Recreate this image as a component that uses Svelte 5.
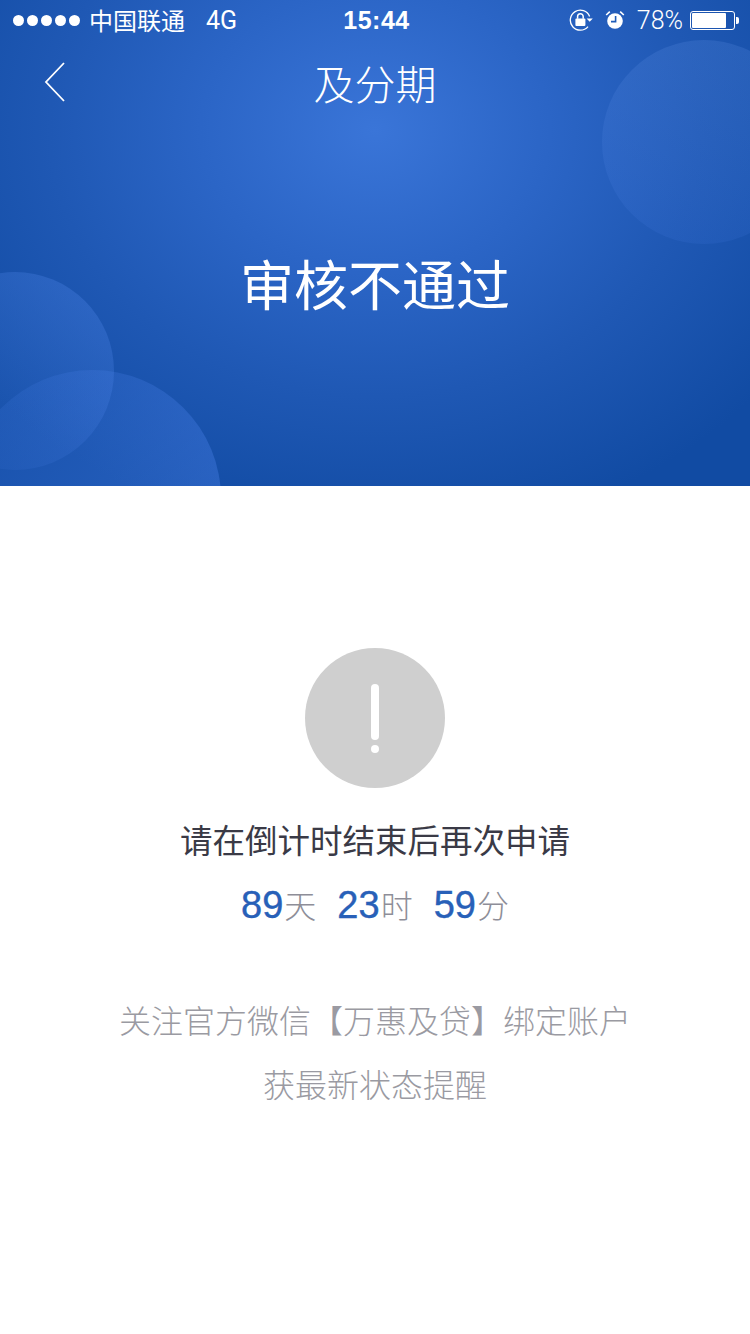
<script>
  const dots = [0, 1, 2, 3, 4];
</script>

<div class="page">
  <header class="hero">
    <span class="bubble b1"></span>
    <span class="bubble b2"></span>
    <span class="bubble b3"></span>
    <div class="status">
      <div class="left">
        <div class="dots">
          {#each dots as d (d)}<i></i>{/each}
        </div>
        <span class="carrier">中国联通</span>
        <span class="net">4G</span>
      </div>
      <span class="clock">15:44</span>
      <div class="right">
        <svg class="lock" width="24" height="22" viewBox="0 0 24 22">
          <path d="M19 17.6A10 10 0 1 1 20.6 7.5" fill="none" stroke="#fff" stroke-width="1.3"/>
          <path d="M17.6 9.4h6.2l-3.1 3.4z" fill="#fff"/>
          <rect x="6.4" y="9.6" width="10" height="7.4" rx="1" fill="#fff"/>
          <path d="M8.6 9.8V7.6a2.8 2.8 0 0 1 5.6 0v2.2" fill="none" stroke="#fff" stroke-width="1.5"/>
        </svg>
        <svg class="alarm" width="20" height="20" viewBox="0 0 20 20">
          <circle cx="10" cy="11" r="7.8" fill="#fff"/>
          <path d="M1.2 5L4.8 1.6M18.8 5L15.2 1.6" stroke="#fff" stroke-width="1.6" fill="none"/>
          <path d="M10.6 6v5.6H6" stroke="#1f5cb8" stroke-width="1.6" fill="none"/>
        </svg>
        <span class="pct">78%</span>
        <div class="battery"><div class="level"></div></div>
        <span class="nub"></span>
      </div>
    </div>
    <div class="nav">
      <svg class="back" width="24" height="44" viewBox="0 0 24 44">
        <path d="M21 3L3 22l18 19" fill="none" stroke="#fff" stroke-width="1.8"/>
      </svg>
      <h1>及分期</h1>
    </div>
    <p class="result">审核不通过</p>
  </header>

  <main class="body">
    <div class="warn"><span class="bar"></span><span class="dot"></span></div>
    <p class="tip">请在倒计时结束后再次申请</p>
    <p class="count">
      <b>89</b><span>天</span><b class="gap">23</b><span>时</span><b class="gap">59</b><span>分</span>
    </p>
    <p class="follow">关注官方微信【万惠及贷】绑定账户<br />获最新状态提醒</p>
  </main>
</div>

<style>
  :global(body) { margin: 0; background: #fff; }
  .page {
    width: 750px;
    height: 1334px;
    overflow: hidden;
    background: #fff;
    font-family: "Noto Sans CJK SC", "Liberation Sans", sans-serif;
  }
  .hero {
    position: relative;
    height: 486px;
    overflow: hidden;
    color: #fff;
    background: radial-gradient(ellipse 500px 410px at 375px 130px, #3a75d8 0%, #2b65c6 35%, #1f58b4 65%, #114ba3 100%);
  }
  .bubble { position: absolute; border-radius: 50%; }
  .b1 {
    left: 602px; top: 40px; width: 204px; height: 204px;
    background: linear-gradient(180deg, rgba(90, 140, 225, 0.24), rgba(70, 125, 230, 0.14));
  }
  .b2 {
    left: -84px; top: 272px; width: 198px; height: 198px;
    background: linear-gradient(40deg, rgba(70, 125, 235, 0.04), rgba(85, 140, 240, 0.32));
  }
  .b3 {
    left: -36px; top: 370px; width: 257px; height: 257px;
    background: linear-gradient(120deg, rgba(70, 125, 235, 0.1), rgba(80, 135, 240, 0.42));
  }
  .status {
    position: relative;
    display: flex;
    align-items: center;
    justify-content: space-between;
    height: 40px;
    padding: 0 11px 0 13px;
  }
  .left, .right { display: flex; align-items: center; flex: 1; }
  .right { justify-content: flex-end; }
  .dots { display: flex; gap: 3px; margin-right: 9px; }
  .dots i { width: 11px; height: 11px; border-radius: 50%; background: #fff; }
  .carrier { font-size: 24px; line-height: 40px; font-weight: 400; }
  .net { font: 400 25px Roboto, sans-serif; margin-left: 21px; }
  .clock { font: bold 25px "Liberation Sans", sans-serif; letter-spacing: 0.5px; margin-left: 1px; }
  .lock { margin-right: 12px; }
  .alarm { margin-right: 12px; }
  .pct { font: 300 25px Roboto, sans-serif; margin-right: 7px; }
  .battery {
    box-sizing: border-box;
    width: 45px;
    height: 19px;
    padding: 1px;
    border: 1px solid #fff;
    border-radius: 3px;
  }
  .level { width: 34px; height: 100%; background: #fff; border-radius: 1px; }
  .nub { width: 3px; height: 7px; margin-left: 1px; background: #fff; border-radius: 0 2px 2px 0; }
  .nav {
    position: relative;
    display: flex;
    align-items: center;
    justify-content: center;
    height: 84px;
  }
  .back { position: absolute; left: 43px; top: 20px; }
  h1 { margin: 0; font-size: 41px; font-weight: 300; line-height: 84px; }
  .result {
    position: relative;
    margin: 123px 0 0;
    text-align: center;
    font-size: 54px;
    line-height: 72px;
    font-weight: 400;
  }
  .body { display: flex; flex-direction: column; align-items: center; padding-top: 162px; }
  .warn {
    display: flex;
    flex-direction: column;
    align-items: center;
    box-sizing: border-box;
    width: 140px;
    height: 140px;
    padding-top: 36px;
    border-radius: 50%;
    background: #cfcfcf;
  }
  .bar { width: 8px; height: 56px; border-radius: 4px; background: #fff; }
  .dot { width: 8px; height: 8px; margin-top: 5px; border-radius: 50%; background: #fff; }
  .tip { margin: 28px 0 0; font-size: 32.5px; line-height: 46px; color: #3a3a46; font-weight: 400; }
  .count {
    display: flex;
    align-items: center;
    margin: 18px 0 0;
    height: 48px;
    color: #8e8e98;
    font-size: 32px;
    font-weight: 300;
  }
  .count b {
    font: 38px "Liberation Sans", sans-serif;
    color: #2860b8;
    -webkit-text-stroke: 0.4px #2860b8;
    margin: 3px 1px 0 0;
  }
  .count b.gap { margin-left: 21px; }
  .follow {
    margin: 59px 0 0;
    text-align: center;
    font-size: 32px;
    line-height: 64px;
    color: #9a9aa2;
    font-weight: 300;
  }
</style>
